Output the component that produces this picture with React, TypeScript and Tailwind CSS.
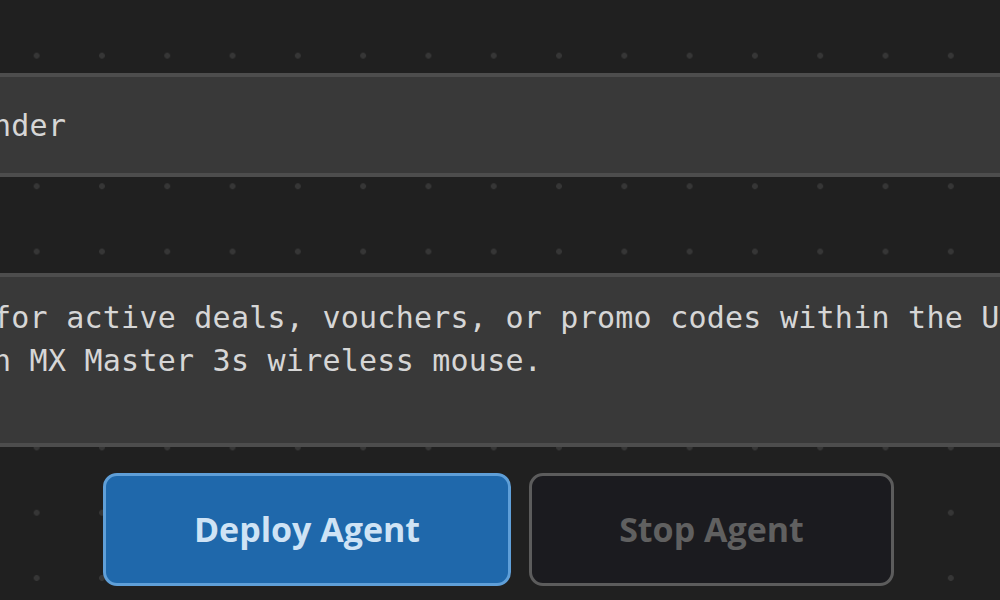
export default function App() {
  return (
    <div className="relative h-[600px] w-[1000px] overflow-hidden bg-[#202020] bg-[radial-gradient(circle,#363636_2.6px,transparent_3.2px)] bg-[size:65.3px_65.3px] bg-[position:4px_23px]">
      <div className="flex flex-col font-['DejaVu_Sans_Mono',monospace] text-[30px] tracking-[0.24px] text-[#d6d6d6]">
        <div className="mt-[73px] -ml-[20px] flex h-[104px] w-[1040px] items-center overflow-hidden rounded-lg border-4 border-[#4d4d4d] bg-[#393939] pl-[9px]">
          <span className="whitespace-pre">nder</span>
        </div>
        <div className="mt-[96px] -ml-[20px] h-[174px] w-[1040px] overflow-hidden rounded-lg border-4 border-[#4d4d4d] bg-[#393939] pl-[9px] pt-[19px] leading-[43px]">
          <div className="whitespace-pre">for active deals, vouchers, or promo codes within the U</div>
          <div className="whitespace-pre">n MX Master 3s wireless mouse.</div>
        </div>
      </div>
      <div className="mt-[26px] ml-[103px] flex gap-[18px] font-['Open_Sans',sans-serif] text-[34px] font-bold">
        <button className="flex h-[113px] w-[408px] items-center justify-center rounded-[14px] border-[3px] border-[#5f9fd8] bg-[#1f68ab] text-[#cfe3f5]">
          Deploy Agent
        </button>
        <button className="flex h-[113px] w-[365px] items-center justify-center rounded-[14px] border-[3px] border-[#5c5c5c] bg-[#1b1b1f] text-[#606060]">
          Stop Agent
        </button>
      </div>
    </div>
  );
}
